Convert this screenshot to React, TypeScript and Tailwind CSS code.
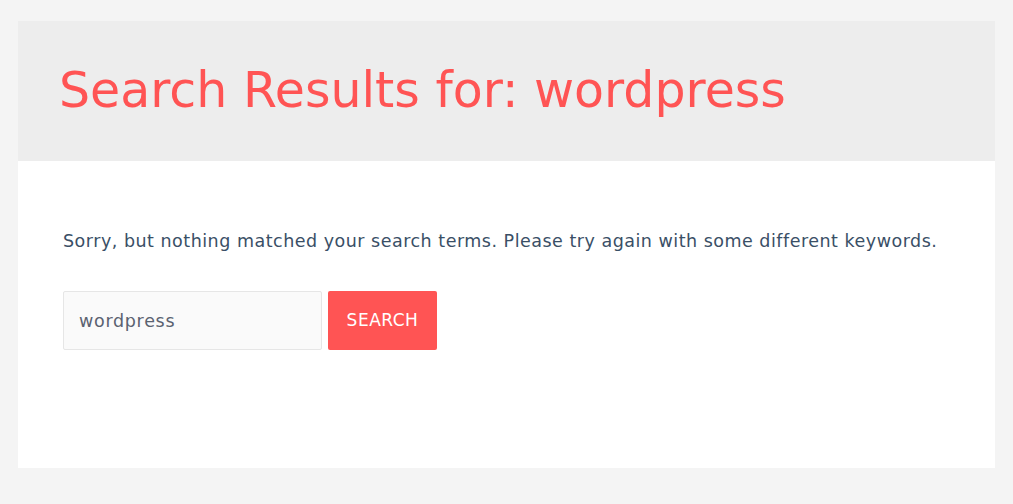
export default function App() {
  return (
    <div className="min-h-screen w-full bg-[#f4f4f4] px-[18px] pt-[21px]" style={{ fontFamily: '"DejaVu Sans", "Noto Sans", sans-serif' }}>
      <div className="w-[977px] bg-white">
        <header className="h-[140px] bg-[#ededed] pl-[41px] pt-[45px]">
          <h1 className="text-[49px] leading-none text-[#ff5454] whitespace-nowrap">
            Search Results for: wordpress
          </h1>
        </header>
        <div className="h-[307px] px-[45px] pt-[70px]">
          <p className="text-[17.5px] leading-[20px] tracking-[0.5px] text-[#3a4f66] whitespace-nowrap">
            Sorry, but nothing matched your search terms. Please try again with some different keywords.
          </p>
          <form className="mt-[40px] flex gap-[6px]" onSubmit={(e) => e.preventDefault()}>
            <input
              type="search"
              defaultValue="wordpress"
              className="h-[59px] w-[259px] rounded-[2px] border border-[#e6e6e6] bg-[#fafafa] px-[15px] text-[17.5px] tracking-[0.7px] text-[#5a6270] outline-none"
            />
            <button
              type="submit"
              className="h-[59px] w-[109px] rounded-[2px] bg-[#ff5454] text-[17px] tracking-[0.5px] text-white"
            >
              SEARCH
            </button>
          </form>
        </div>
      </div>
    </div>
  );
}
